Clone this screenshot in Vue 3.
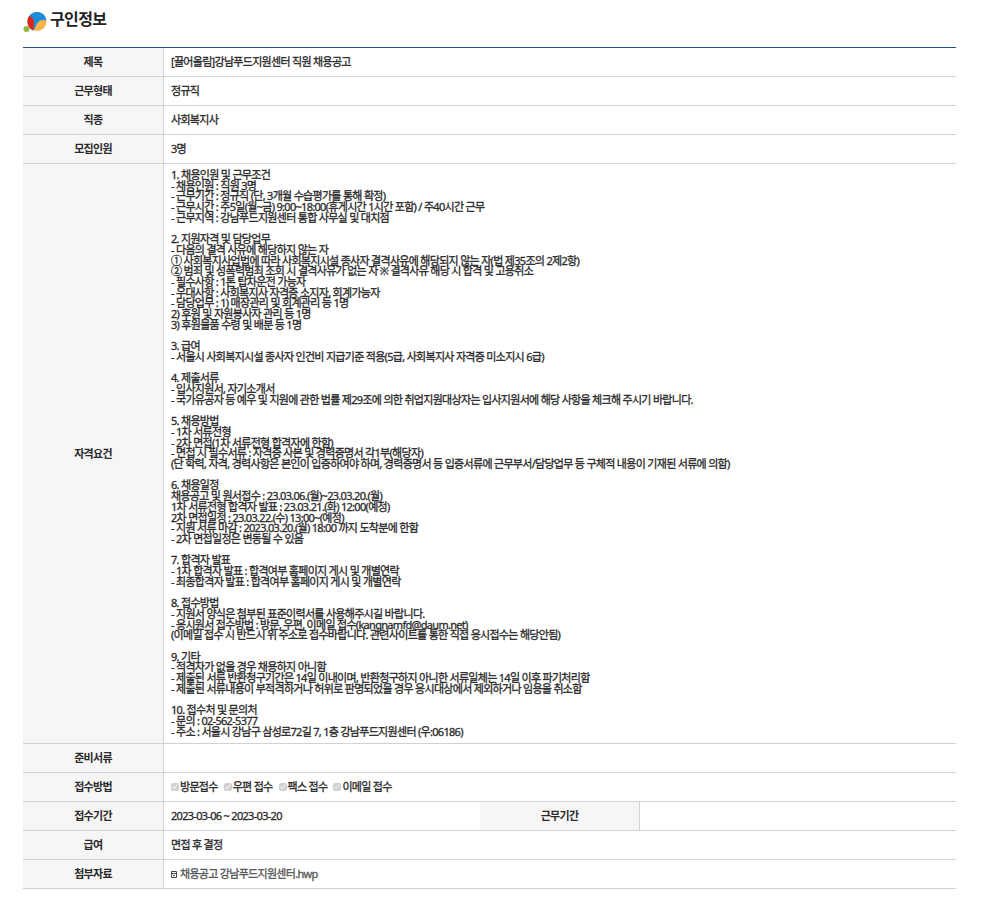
<script setup>
const rows = [
  { label: '제목', text: '[끌어올림]강남푸드지원센터 직원 채용공고' },
  { label: '근무형태', text: '정규직' },
  { label: '직종', text: '사회복지사' },
  { label: '모집인원', text: '3명' }
]
const detail = `1. 채용인원 및 근무조건
- 채용인원 : 직원 3명
- 근무기간 : 정규직 (단, 3개월 수습평가를 통해 확정)
- 근무시간 : 주5일(월~금) 9:00~18:00(휴게시간 1시간 포함) / 주40시간 근무
- 근무지역 : 강남푸드지원센터 통합 사무실 및 대치점

2. 지원자격 및 담당업무
- 다음의 결격 사유에 해당하지 않는 자
① 사회복지사업법에 따라 사회복지시설 종사자 결격사유에 해당되지 않는 자(법 제35조의 2제2항)
② 범죄 및 성폭력범죄 조회 시 결격사유가 없는 자 ※ 결격사유 해당 시 합격 및 고용취소
- 필수사항 : 1톤 탑차운전 가능자
- 우대사항 : 사회복지사 자격증 소지자, 회계가능자
- 담당업무 : 1) 매장관리 및 회계관리 등 1명
2) 후원 및 자원봉사자 관리 등 1명
3) 후원물품 수령 및 배분 등 1명

3. 급여
- 서울시 사회복지시설 종사자 인건비 지급기준 적용(5급, 사회복지사 자격증 미소지시 6급)

4. 제출서류
- 입사지원서, 자기소개서
- 국가유공자 등 예우 및 지원에 관한 법률 제29조에 의한 취업지원대상자는 입사지원서에 해당 사항을 체크해 주시기 바랍니다.

5. 채용방법
- 1차 서류전형
- 2차 면접(1차 서류전형 합격자에 한함)
- 면접 시 필수서류 : 자격증 사본 및 경력증명서 각1부(해당자)
(단 학력, 자격, 경력사항은 본인이 입증하여야 하며, 경력증명서 등 입증서류에 근무부서/담당업무 등 구체적 내용이 기재된 서류에 의함)

6. 채용일정
채용공고 및 원서접수 : 23.03.06.(월)~23.03.20.(월)
1차 서류전형 합격자 발표 : 23.03.21.(화) 12:00(예정)
2차 면접일정 : 23.03.22.(수) 13:00~(예정)
- 지원 서류 마감 : 2023.03.20.(월) 18:00 까지 도착분에 한함
- 2차 면접일정은 변동될 수 있음

7. 합격자 발표
- 1차 합격자 발표 : 합격여부 홈페이지 게시 및 개별연락
- 최종합격자 발표 : 합격여부 홈페이지 게시 및 개별연락

8. 접수방법
- 지원서 양식은 첨부된 표준이력서를 사용해주시길 바랍니다.
- 응시원서 접수방법 : 방문, 우편, 이메일 접수(kangnamfd@daum.net)
(이메일 접수 시 반드시 위 주소로 접수바랍니다. 관련사이트를 통한 직접 응시접수는 해당안됨)

9. 기타
- 적격자가 없을 경우 채용하지 아니함
- 제출된 서류 반환청구기간은 14일 이내이며, 반환청구하지 아니한 서류일체는 14일 이후 파기처리함
- 제출된 서류내용이 부적격하거나 허위로 판명되었을 경우 응시대상에서 제외하거나 임용을 취소함

10. 접수처 및 문의처
- 문의 : 02-562-5377
- 주소 : 서울시 강남구 삼성로72길 7, 1층 강남푸드지원센터 (우:06186)`
const methods = ['방문접수', '우편 접수', '팩스 접수', '이메일 접수']
</script>

<template>
  <main class="page">
    <header class="head">
      <svg class="logo" width="24" height="22" viewBox="0 0 24 22" aria-hidden="true">
        <circle cx="3.500" cy="18" r="3" fill="#8fb83a" />
        <circle cx="14" cy="10.500" r="9.500" fill="#fbb44c" />
        <path d="M6.500 4.600A9.500 9.500 0 0 1 23.400 9.500C19 8 15 9.500 13 14.500 11.800 17.400 11 19 10 19.400 7 18 4.500 14.500 4.500 10.500 4.500 8.200 5.300 6.100 6.500 4.600Z" fill="#1b8fdc" />
        <path d="M6.300 5C8.500 5.500 10.500 7.500 10.800 10 11.200 13 10.800 16.500 10 19.400 6.800 18 4.500 14.500 4.500 10.500 4.500 8.500 5.200 6.500 6.300 5Z" fill="#e2231a" />
      </svg>
      <h2 class="title">구인정보</h2>
    </header>
    <table class="info">
      <colgroup>
        <col class="c1" />
        <col class="c2" />
        <col class="c3" />
        <col />
      </colgroup>
      <tbody>
        <tr v-for="r in rows" :key="r.label">
          <th>{{ r.label }}</th>
          <td colspan="3">{{ r.text }}</td>
        </tr>
        <tr>
          <th>자격요건</th>
          <td colspan="3" class="detail">{{ detail }}</td>
        </tr>
        <tr>
          <th>준비서류</th>
          <td colspan="3"></td>
        </tr>
        <tr>
          <th>접수방법</th>
          <td colspan="3">
            <span class="methods">
              <label v-for="m in methods" :key="m" class="method">
                <input type="checkbox" checked disabled />{{ m }}
              </label>
            </span>
          </td>
        </tr>
        <tr>
          <th>접수기간</th>
          <td>2023-03-06 ~ 2023-03-20</td>
          <th>근무기간</th>
          <td></td>
        </tr>
        <tr>
          <th>급여</th>
          <td colspan="3">면접 후 결정</td>
        </tr>
        <tr>
          <th>첨부자료</th>
          <td colspan="3">
            <a class="file">
              <svg width="6" height="7" viewBox="0 0 6 7" aria-hidden="true">
                <path d="M.5.500H5.500V6.500H.5ZM.5 2.500H5.500M2 4.500H4" fill="none" stroke="#444" stroke-width="1" />
              </svg>
              채용공고 강남푸드지원센터.hwp
            </a>
          </td>
        </tr>
      </tbody>
    </table>
  </main>
</template>

<style>
body { background: #fff; }
</style>

<style scoped>
.page {
  width: 933px;
  padding-left: 23px;
  font-family: "Noto Sans", "Noto Sans CJK KR", sans-serif;
  font-size: 11px;
  color: #2a2a2a;
}
.head {
  display: flex;
  align-items: center;
  gap: 3px;
  height: 47px;
  padding-bottom: 5px;
  box-sizing: border-box;
}
.logo { margin-top: 2px; }
.title {
  margin: 0 0 4px;
  font-size: 16px;
  line-height: 22px;
  font-weight: 700;
  letter-spacing: -0.6px;
  color: #222;
}
.info {
  width: 933px;
  table-layout: fixed;
  border-collapse: separate;
  border-spacing: 0;
  border-top: 1px solid #2b4f8c;
}
.c1 { width: 141px; }
.c2 { width: 316px; }
.c3 { width: 160px; }
th, td {
  height: 28px;
  padding: 0 7px;
  border-bottom: 1px solid #d2d2d2;
  letter-spacing: -0.7px;
  line-height: 16px;
  box-sizing: content-box;
}
td {
  font-weight: 400;
  -webkit-text-stroke: 0.3px #2a2a2a;
}
th {
  padding: 0;
  background: #f6f6f6;
  border-right: 1px solid #d2d2d2;
  text-align: center;
  font-weight: 700;
}
.detail {
  padding-top: 6px;
  padding-bottom: 6px;
  height: auto;
  line-height: 10.7px;
  white-space: pre-line;
}
.methods { display: flex; gap: 6px; }
.method { display: flex; align-items: center; gap: 1px; }
.method input { width: 8px; height: 8px; margin: 0; }
.file { display: flex; align-items: center; gap: 3px; color: #555; -webkit-text-stroke-color: #555; }
</style>
